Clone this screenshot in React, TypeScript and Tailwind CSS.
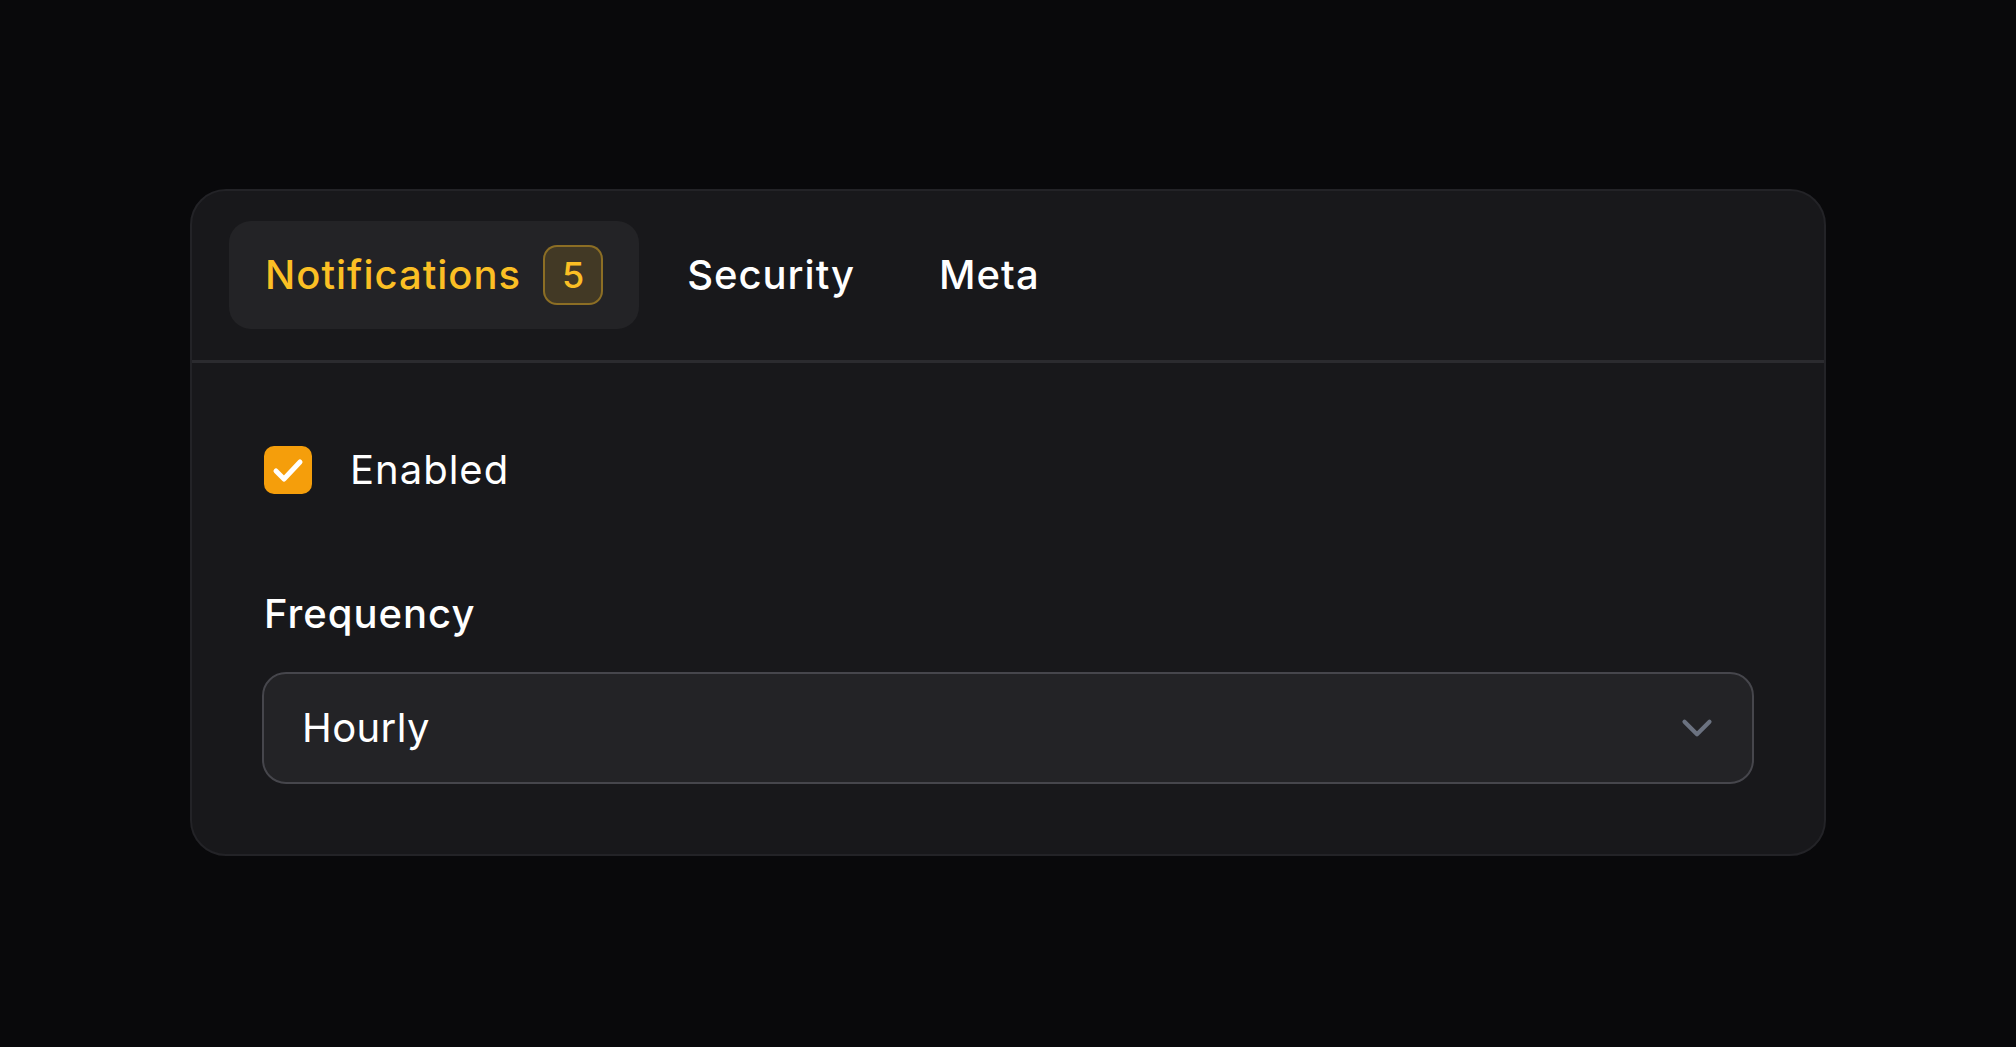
import { ChevronDown } from "lucide-react";

const tabs = [
  { label: "Notifications", count: 5, active: true },
  { label: "Security" },
  { label: "Meta" },
];

export default function App() {
  return (
    <div
      className="min-h-screen w-full bg-[#09090b] pt-[189px] flex justify-center"
      style={{ fontFamily: "Inter, 'Noto Sans', sans-serif" }}
    >
      <div className="w-[1636px] h-fit rounded-[36px] border-2 border-[#232327] bg-[#18181b]">
        {/* Tabs */}
        <div className="flex items-center gap-[12px] pl-[37px] pt-[30px] pb-[31px]">
          {tabs.map((t) =>
            t.active ? (
              <button
                key={t.label}
                className="flex h-[108px] items-center gap-[22px] rounded-[22px] bg-[#232326] px-[36px] text-[40px] font-medium tracking-wide text-[#fbbf24]"
              >
                <span>{t.label}</span>
                <span className="flex h-[60px] w-[60px] items-center justify-center rounded-[14px] border-2 border-[#fbbf24]/40 bg-[#fbbf24]/15 text-[36px] leading-none tracking-normal">
                  {t.count}
                </span>
              </button>
            ) : (
              <button
                key={t.label}
                className="flex h-[108px] items-center px-[36px] text-[40px] font-medium tracking-wide text-white"
              >
                {t.label}
              </button>
            )
          )}
        </div>
        <div className="h-[3px] bg-[#2b2b2f]" />

        {/* Content */}
        <div className="px-[70px] pt-[69px] pb-[70px]">
          <label className="flex h-[76px] items-center gap-[38px] pl-[2px]">
            <span className="flex h-[48px] w-[48px] items-center justify-center rounded-[10px] bg-[#f59e0b]">
              <svg width="48" height="48" viewBox="0 0 48 48" fill="none">
                <polyline
                  points="12,25 20,33 36,16"
                  stroke="white"
                  strokeWidth="5"
                  strokeLinecap="round"
                  strokeLinejoin="round"
                />
              </svg>
            </span>
            <span className="text-[40px] tracking-wide text-white">Enabled</span>
          </label>

          <div className="mt-[82px] pl-[2px] text-[40px] leading-[48px] font-medium tracking-wide text-white">
            Frequency
          </div>

          <button className="mt-[34px] flex h-[112px] w-full items-center justify-between rounded-[24px] border-2 border-[#46464c] bg-[#232326] pl-[38px] pr-[30px] text-[40px] tracking-[0.01em] text-white">
            <span>Hourly</span>
            <ChevronDown size={50} strokeWidth={2} className="text-[#6b7280]" />
          </button>
        </div>
      </div>
    </div>
  );
}
